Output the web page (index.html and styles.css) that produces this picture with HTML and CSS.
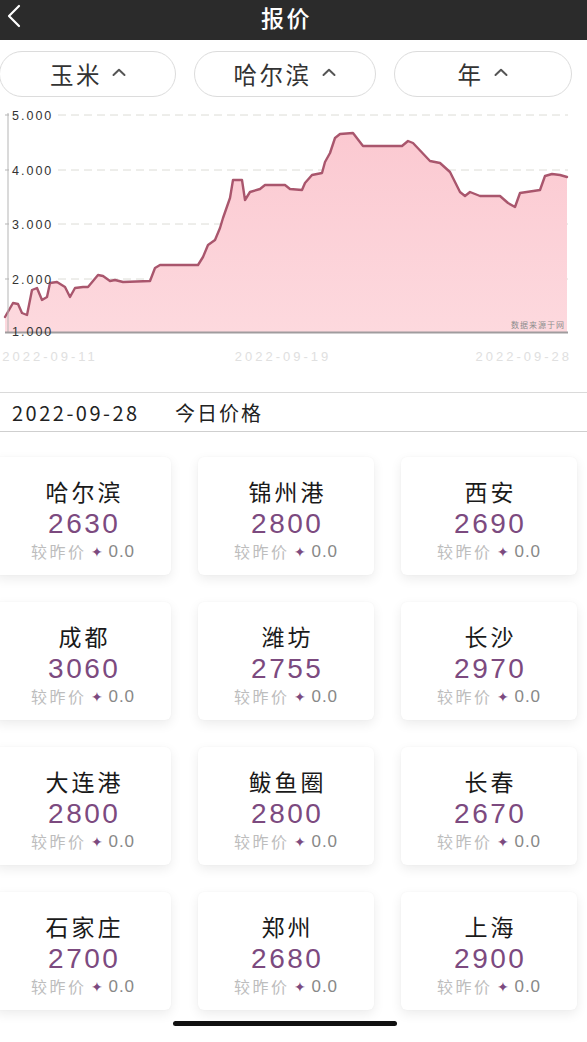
FILE: index.html
```html
<!DOCTYPE html>
<html lang="zh">
<head>
<meta charset="utf-8">
<title>报价</title>
<link rel="stylesheet" href="styles.css">
</head>
<body>
<div class="page">
  <header class="topbar">
    <svg class="back" width="18" height="24" viewBox="0 0 18 24"><path d="M14 2 L4 12 L14 22" fill="none" stroke="#fff" stroke-width="2.2" stroke-linecap="round" stroke-linejoin="round"/></svg>
    <h1 class="title">报价</h1>
  </header>

  <div class="filters">
    <button class="pill pill-a"><span class="ptxt">玉米</span><svg class="caret" width="16" height="10" viewBox="0 0 16 10"><path d="M2.5 8 L8 2.8 L13.5 8" fill="none" stroke="#555" stroke-width="2" stroke-linecap="round" stroke-linejoin="round"/></svg></button>
    <button class="pill pill-b"><span class="ptxt">哈尔滨</span><svg class="caret" width="16" height="10" viewBox="0 0 16 10"><path d="M2.5 8 L8 2.8 L13.5 8" fill="none" stroke="#555" stroke-width="2" stroke-linecap="round" stroke-linejoin="round"/></svg></button>
    <button class="pill pill-c"><span class="ptxt">年</span><svg class="caret" width="16" height="10" viewBox="0 0 16 10"><path d="M2.5 8 L8 2.8 L13.5 8" fill="none" stroke="#555" stroke-width="2" stroke-linecap="round" stroke-linejoin="round"/></svg></button>
  </div>

  <svg class="chart" width="587" height="292" viewBox="0 100 587 292">
    <defs>
      <linearGradient id="fillg" x1="0" y1="0" x2="0" y2="1">
        <stop offset="0" stop-color="#fbc9d1"/>
        <stop offset="1" stop-color="#fdd9de"/>
      </linearGradient>
    </defs>
    <g stroke="#dcdcd6" stroke-width="1" stroke-dasharray="8 5">
      <line x1="58" y1="115" x2="568" y2="115"/>
      <line x1="58" y1="170" x2="568" y2="170"/>
      <line x1="58" y1="224" x2="568" y2="224"/>
      <line x1="58" y1="279" x2="568" y2="279"/>
    </g>
    <polygon fill="url(#fillg)" points="5,317 13,303 18,304 22,313 27,315 32,290 37,288 42,300 47,297 50,283 57,282 65,287 70,297 75,288 83,287 88,287 98,275 103,276 110,281 115,280 123,282 150,281 155,268 160,265 198,265 203,257 208,245 215,240 220,228 223,218 230,198 233,180 242,180 245,200 250,192 260,189 265,185 285,185 290,189 302,190 305,183 312,175 322,173 325,162 330,153 335,138 340,134 353,133 363,146 402,146 408,141 413,143 430,161 440,163 450,172 460,192 465,196 470,192 480,196 500,196 508,203 515,207 520,193 540,190 545,176 552,174 560,175 567,177 567,332 5,332"/>
    <polyline fill="none" stroke="#a9566d" stroke-width="2.4" stroke-linejoin="round" stroke-linecap="round" points="5,317 13,303 18,304 22,313 27,315 32,290 37,288 42,300 47,297 50,283 57,282 65,287 70,297 75,288 83,287 88,287 98,275 103,276 110,281 115,280 123,282 150,281 155,268 160,265 198,265 203,257 208,245 215,240 220,228 223,218 230,198 233,180 242,180 245,200 250,192 260,189 265,185 285,185 290,189 302,190 305,183 312,175 322,173 325,162 330,153 335,138 340,134 353,133 363,146 402,146 408,141 413,143 430,161 440,163 450,172 460,192 465,196 470,192 480,196 500,196 508,203 515,207 520,193 540,190 545,176 552,174 560,175 567,177"/>
    <line x1="8" y1="113" x2="8" y2="332" stroke="#b5b5b5" stroke-width="1"/>
    <g stroke="#b5b5b5" stroke-width="1">
      <line x1="5" y1="115" x2="9" y2="115"/>
      <line x1="5" y1="170" x2="9" y2="170"/>
      <line x1="5" y1="224" x2="9" y2="224"/>
      <line x1="5" y1="279" x2="9" y2="279"/>
    </g>
    <line x1="5" y1="332.5" x2="568" y2="332.5" stroke="#a09c9e" stroke-width="2"/>
    <g class="ylab">
      <text x="12" y="119.5">5.000</text>
      <text x="12" y="174.5">4.000</text>
      <text x="12" y="228.5">3.000</text>
      <text x="12" y="283.5">2.000</text>
      <text x="12" y="336">1.000</text>
    </g>
    <text class="mark" x="565" y="328" text-anchor="end">数据来源于网</text>
    <g class="xlab">
      <text x="50" y="361" text-anchor="middle">2022-09-11</text>
      <text x="283" y="361" text-anchor="middle">2022-09-19</text>
      <text x="572" y="361" text-anchor="end">2022-09-28</text>
    </g>
  </svg>

  <div class="daterow">
    <span class="date">2022-09-28</span>
    <span class="today">今日价格</span>
  </div>

  <div class="cards">
    <div class="card"><div class="city">哈尔滨</div><div class="price">2630</div><div class="sub"><span class="lbl">较昨价</span><span class="star">✦</span><span class="chg">0.0</span></div></div>
    <div class="card"><div class="city">锦州港</div><div class="price">2800</div><div class="sub"><span class="lbl">较昨价</span><span class="star">✦</span><span class="chg">0.0</span></div></div>
    <div class="card"><div class="city">西安</div><div class="price">2690</div><div class="sub"><span class="lbl">较昨价</span><span class="star">✦</span><span class="chg">0.0</span></div></div>
    <div class="card"><div class="city">成都</div><div class="price">3060</div><div class="sub"><span class="lbl">较昨价</span><span class="star">✦</span><span class="chg">0.0</span></div></div>
    <div class="card"><div class="city">潍坊</div><div class="price">2755</div><div class="sub"><span class="lbl">较昨价</span><span class="star">✦</span><span class="chg">0.0</span></div></div>
    <div class="card"><div class="city">长沙</div><div class="price">2970</div><div class="sub"><span class="lbl">较昨价</span><span class="star">✦</span><span class="chg">0.0</span></div></div>
    <div class="card"><div class="city">大连港</div><div class="price">2800</div><div class="sub"><span class="lbl">较昨价</span><span class="star">✦</span><span class="chg">0.0</span></div></div>
    <div class="card"><div class="city">鲅鱼圈</div><div class="price">2800</div><div class="sub"><span class="lbl">较昨价</span><span class="star">✦</span><span class="chg">0.0</span></div></div>
    <div class="card"><div class="city">长春</div><div class="price">2670</div><div class="sub"><span class="lbl">较昨价</span><span class="star">✦</span><span class="chg">0.0</span></div></div>
    <div class="card"><div class="city">石家庄</div><div class="price">2700</div><div class="sub"><span class="lbl">较昨价</span><span class="star">✦</span><span class="chg">0.0</span></div></div>
    <div class="card"><div class="city">郑州</div><div class="price">2680</div><div class="sub"><span class="lbl">较昨价</span><span class="star">✦</span><span class="chg">0.0</span></div></div>
    <div class="card"><div class="city">上海</div><div class="price">2900</div><div class="sub"><span class="lbl">较昨价</span><span class="star">✦</span><span class="chg">0.0</span></div></div>
  </div>

  <div class="home-indicator"></div>
</div>
</body>
</html>
```

FILE: styles.css
```css
* { box-sizing: border-box; }
html, body {
  margin: 0;
  padding: 0;
  background: #fff;
  font-family: "Noto Sans CJK SC", "Noto Sans", sans-serif;
}
.page {
  position: relative;
  width: 587px;
  height: 1042px;
  overflow: hidden;
  background: #fff;
}
.topbar {
  position: relative;
  height: 40px;
  background: #2b2b2b;
  display: flex;
  justify-content: center;
  align-items: flex-start;
}
.back {
  position: absolute;
  left: 5px;
  top: 4px;
}
.title {
  margin: 0 0 0 -14px;
  color: #fff;
  font-size: 23px;
  font-weight: 500;
  line-height: 34px;
  letter-spacing: 2.5px;
}
.filters {
  display: flex;
  gap: 18px;
  padding-top: 11px;
  margin-left: -1px;
}
.pill {
  height: 46px;
  border: 1px solid #dcdcdc;
  border-radius: 23px;
  background: #fff;
  font-family: inherit;
  color: #333;
  display: flex;
  align-items: center;
  justify-content: center;
  gap: 9px;
  padding: 0;
}
.ptxt {
  font-size: 23.5px;
  line-height: 34px;
  letter-spacing: 2.5px;
}
.pill-a { width: 177px; padding-left: 2px; }
.pill-b { width: 182px; }
.pill-c { width: 178px; }
.caret { margin-top: -4px; }
.chart {
  display: block;
  margin-top: 3px;
}
.ylab text {
  font-family: "Liberation Sans", sans-serif;
  font-size: 12.5px;
  letter-spacing: 2px;
  fill: #333;
}
.mark {
  font-size: 8px;
  fill: #8d8d8d;
  letter-spacing: 1px;
}
.xlab text {
  font-family: "Liberation Sans", sans-serif;
  font-size: 13px;
  letter-spacing: 3px;
  fill: #e0e0e0;
}
.daterow {
  height: 40px;
  border-top: 1px solid #dadada;
  border-bottom: 1px solid #cfcfcf;
  display: flex;
  align-items: center;
  padding-left: 12px;
  font-size: 20px;
  line-height: 29px;
  color: #222;
}
.date { width: 163px; letter-spacing: 2.5px; }
.today { letter-spacing: 2px; }
.cards {
  display: grid;
  grid-template-columns: repeat(3, 176px);
  column-gap: 27px;
  row-gap: 27px;
  margin-left: -5px;
  margin-top: 25px;
}
.card {
  height: 118px;
  background: #fff;
  border-radius: 6px;
  box-shadow: 0 4px 12px rgba(0, 0, 0, 0.08), 0 0 2px rgba(0, 0, 0, 0.04);
  padding-top: 18px;
  text-align: center;
}
.city {
  font-size: 23px;
  line-height: 33px;
  letter-spacing: 3px;
  text-indent: 3px;
  color: #1a1a1a;
}
.price {
  font-family: "Liberation Sans", sans-serif;
  font-size: 28px;
  line-height: 32px;
  color: #7c4a7f;
  letter-spacing: 2.5px;
  text-indent: 2.5px;
}
.sub {
  font-size: 16px;
  line-height: 23px;
  display: flex;
  justify-content: center;
  align-items: center;
  gap: 5px;
}
.lbl { color: #bdbdbd; letter-spacing: 2.5px; }
.star { color: #7c4a7f; font-size: 14px; }
.chg { color: #888; font-family: "Liberation Sans", sans-serif; font-size: 17px; letter-spacing: 1px; }
.home-indicator {
  position: absolute;
  left: 173px;
  top: 1021px;
  width: 224px;
  height: 5px;
  border-radius: 3px;
  background: #111;
}
```
